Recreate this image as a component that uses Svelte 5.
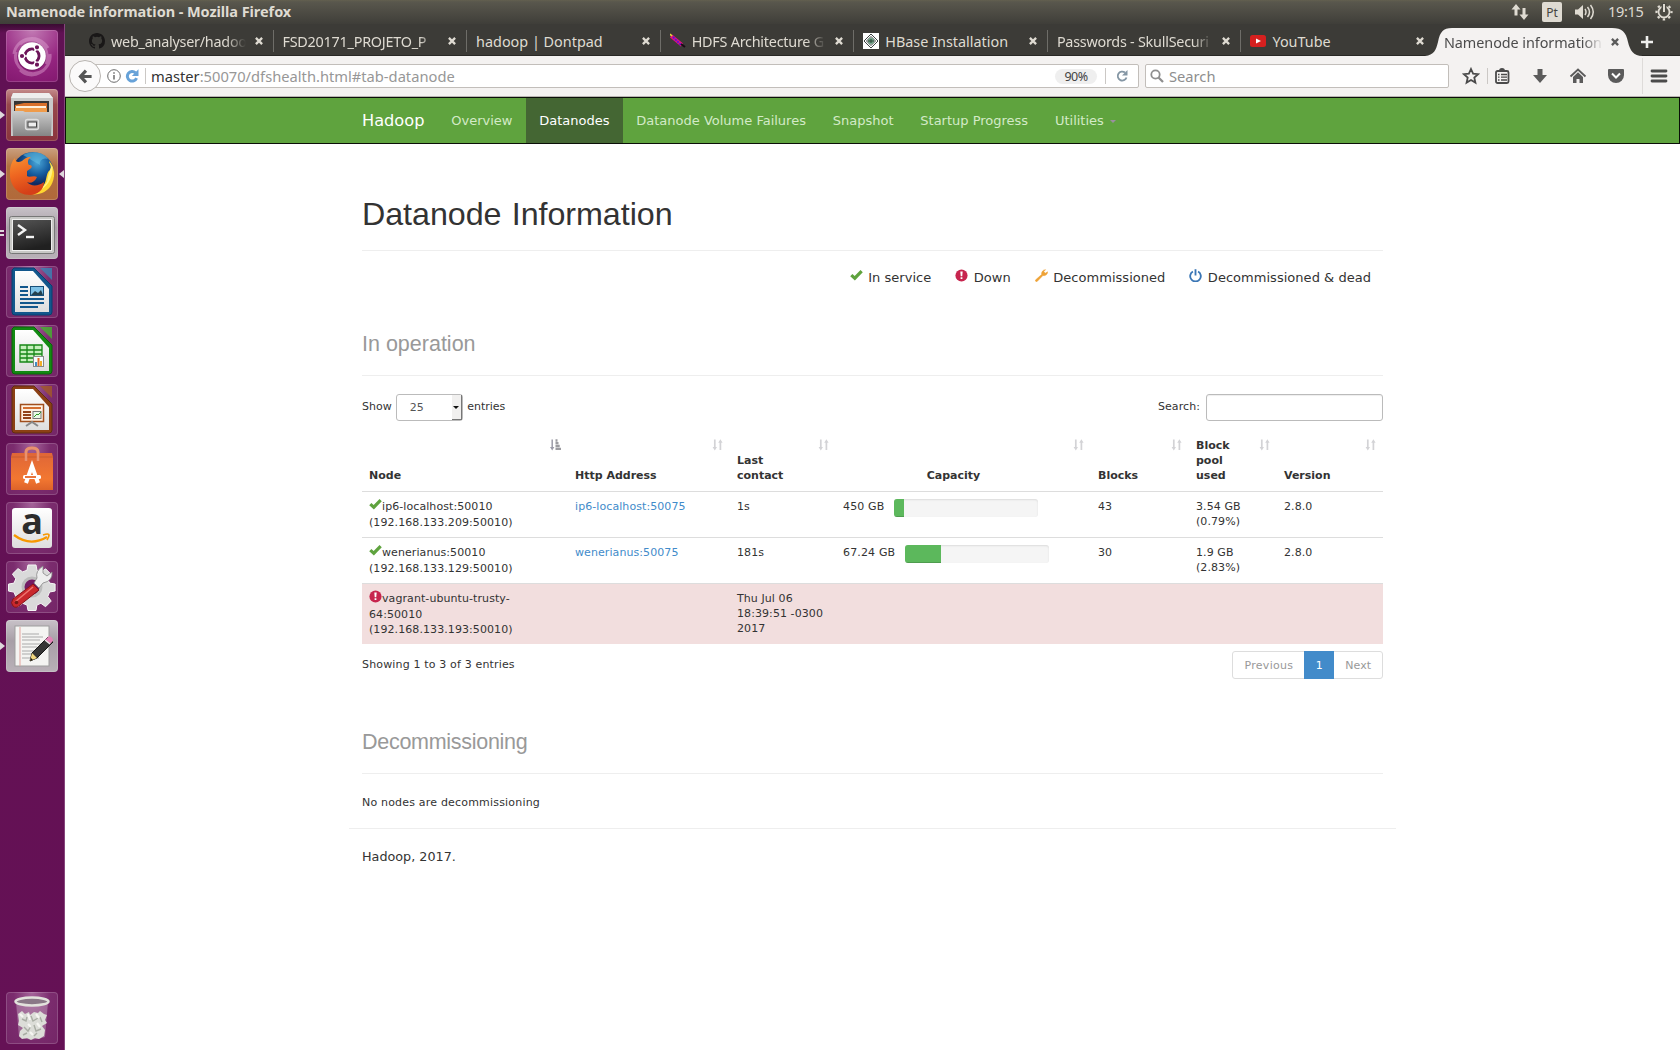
<script>
  const tabs = [
    { title: 'web_analyser/hadoo', icon: 'github', fade: true },
    { title: 'FSD20171_PROJETO_P', icon: '', fade: true },
    { title: 'hadoop | Dontpad', icon: '' },
    { title: 'HDFS Architecture G', icon: 'feather', fade: true },
    { title: 'HBase Installation', icon: 'emblem' },
    { title: 'Passwords - SkullSecuri', icon: '', fade: true },
    { title: 'YouTube', icon: 'youtube' }
  ];

  const launcher = [
    { id: 'dash', tone: 'magenta' },
    { id: 'files', tone: 'red', left: 1 },
    { id: 'firefox', tone: 'orange', left: 1, right: true },
    { id: 'terminal', tone: 'grey', left: 2 },
    { id: 'writer', tone: 'plum' },
    { id: 'calc', tone: 'plum' },
    { id: 'impress', tone: 'plum' },
    { id: 'software', tone: 'plum' },
    { id: 'amazon', tone: 'plum' },
    { id: 'settings', tone: 'plum' },
    { id: 'gedit', tone: 'grey', left: 1 }
  ];

  const nav = ['Overview', 'Datanodes', 'Datanode Volume Failures', 'Snapshot', 'Startup Progress'];

  const legend = [
    { icon: 'ok', label: 'In service' },
    { icon: 'down', label: 'Down' },
    { icon: 'wrench', label: 'Decommissioned' },
    { icon: 'power', label: 'Decommissioned & dead' }
  ];

  const columns = [['Node'], ['Http Address'], ['Last', 'contact'], ['Capacity'], ['Blocks'], ['Block', 'pool', 'used'], ['Version']];

  const rows = [
    { icon: 'ok', node: ['ip6-localhost:50010', '(192.168.133.209:50010)'], http: 'ip6-localhost:50075', contact: ['1s'], cap: '450 GB', used: 7, blocks: '43', pool: ['3.54 GB', '(0.79%)'], version: '2.8.0' },
    { icon: 'ok', node: ['wenerianus:50010', '(192.168.133.129:50010)'], http: 'wenerianus:50075', contact: ['181s'], cap: '67.24 GB', used: 25, blocks: '30', pool: ['1.9 GB', '(2.83%)'], version: '2.8.0' },
    { icon: 'down', dead: true, node: ['vagrant-ubuntu-trusty-', '64:50010', '(192.168.133.193:50010)'], http: '', contact: ['Thu Jul 06', '18:39:51 -0300', '2017'], cap: '', used: 0, blocks: '', pool: [], version: '' }
  ];
</script>

{#snippet status(kind)}
  <svg class="status" viewBox="0 0 12 12">
    {#if kind === 'ok'}
      <path d="M0.2 6.6 L2.2 4.7 L4.3 6.5 L9.7 1 L11.8 3 L4.5 10.5 Z" fill="#5fa33e" />
    {:else if kind === 'down'}
      <circle cx="6" cy="6" r="5.6" fill="#c7254e" />
      <path d="M4.9 2.4h2.2l-.4 4.2H5.3z" fill="#fff" />
      <rect x="5.1" y="7.5" width="1.8" height="1.7" rx=".4" fill="#fff" />
    {:else if kind === 'wrench'}
      <path d="M.4 10.2 L6.2 5 C5.8 3 7.2 .7 9.7 .6 L8.1 2.4 L9.5 3.9 L11.6 2.6 C11.7 5 9.6 6.6 7.3 6 L1.9 11.6 C1 12 0 11 .4 10.2z" fill="#eea236" stroke="#eea236" stroke-width=".5" />
    {:else}
      <path d="M3.6 2.3 A4.9 4.9 0 1 0 8.4 2.3" fill="none" stroke="#3a76b5" stroke-width="1.7" />
      <path d="M6 .2V6" stroke="#3a76b5" stroke-width="1.7" />
    {/if}
  </svg>
{/snippet}

{#snippet closeMark()}
  <svg class="close" viewBox="0 0 10 10"><path d="M1.9 1.9 L8.1 8.1 M8.1 1.9 L1.9 8.1" stroke="currentColor" stroke-width="2.3" /></svg>
{/snippet}

{#snippet sortMark(active)}
  <svg class="sort" viewBox="0 0 12 12">
    {#if active}
      <path d="M2.2 .5V9" stroke="#9b9ba8" stroke-width="1.5" /><path d="M0 8h4.4L2.2 11.4z" fill="#9b9ba8" />
      <path d="M5.5 1.500h2M5.500 4.200h3M5.500 7h4.200M5.500 9.900h5.500" stroke="#9b9ba0" stroke-width="2.300" />
    {:else}
      <path d="M2.800 .500V9M8.400 3V11" stroke="#d3d3d6" stroke-width="1.700" />
      <path d="M.600 8H5L2.800 11.500zM6.200 3.800h4.400L8.400 .300z" fill="#d3d3d6" />
    {/if}
  </svg>
{/snippet}

{#snippet appIcon(id)}
  <svg class="app-icon" viewBox="0 0 52 52">
    {#if id === 'dash'}
      <path d="M8 24C10 8 32 2 42 18M44 24C46 40 26 52 14 40M14 14C28 2 46 16 40 34M38 40C24 50 6 38 10 22" fill="none" stroke="#e9b3dc" stroke-width="3" opacity=".4" />
      <circle cx="26" cy="26.5" r="14.500" fill="#3c0b35" opacity=".25" />
      <circle cx="26" cy="26" r="13.800" fill="#fff" />
      <circle cx="26" cy="26" r="7" fill="none" stroke="#6c1459" stroke-width="3" />
      <path d="M26 26H14M26 26L32 15.600M26 26L32 36.400" stroke="#fff" stroke-width="1.600" />
      <circle cx="26" cy="26" r="5.400" fill="#fff" />
      <g fill="#6c1459" stroke="#fff" stroke-width="1.200"><circle cx="16" cy="26" r="2.700" /><circle cx="31" cy="17.300" r="2.700" /><circle cx="31" cy="34.700" r="2.700" /></g>
    {:else if id === 'files'}
      <path d="M7 4h36l4 5v38H5V9z" fill="#c9c9c9" /><path d="M7 4h36l4 5H5z" fill="#eee" />
      <rect x="8" y="12" width="35" height="14" fill="#353535" />
      <path d="M9 16l9-2h23v9H9z" fill="#d9702b" /><path d="M10 17h30v2H10z" fill="#fff0dc" /><path d="M9 19h32v5H9z" fill="#ef9b4b" />
      <path d="M6 22h11l2 1h27l-1 24H7z" fill="url(#metal)" />
      <rect x="19.500" y="30.500" width="13" height="10" rx="2" fill="#aaa" stroke="#dedede" stroke-width="1.300" /><rect x="22" y="33" width="8.500" height="5" fill="#eee" stroke="#444" />
    {:else if id === 'firefox'}
      <circle cx="27" cy="25" r="21" fill="url(#globe)" />
      <path d="M17 7C24 3 36 3 42 11C37 9 33 13 34 17C29 14 24 11 17 7z" fill="#62bde2" opacity=".55" />
      <path d="M43 13C52 22 49 40 36 45C31 47 24 47 22 44L35 40C42 35 39 25 44 22C46 18 43 15 43 13z" fill="#ffd630" />
      <path d="M46 17C48 26 43 38 34 42L41 34C42 27 44 22 46 17z" fill="#fff282" />
      <path d="M9 10C9 14 12 15 16 13C20 9 23 9 25 9C22 11 21 14 23 17C26 17 27 19 24 21L21 23V28C23 30 28 27 31 29C29 34 24 36 21 34C25 39 33 38 38 34C38 42 31 47 24 47C10 47 3 35 4 24C4 18 6 13 9 10z" fill="url(#fox)" />
    {:else if id === 'terminal'}
      <rect x="3.500" y="9.500" width="45" height="37" rx="2" fill="#c8c8c6" stroke="#777" />
      <rect x="6.500" y="12.500" width="39" height="31" fill="url(#screen)" stroke="#eee" />
      <path d="M12 18l7 5-7 5" fill="none" stroke="#f3f3f3" stroke-width="2.400" /><path d="M20 30h8" stroke="#f3f3f3" stroke-width="2.400" />
    {:else if id === 'writer' || id === 'calc' || id === 'impress'}
      {@const c = id === 'writer' ? '#12578c' : id === 'calc' ? '#128a12' : '#8b4014'}
      {@const edge = id === 'writer' ? '#083f70' : id === 'calc' ? '#0a6209' : '#5f2d10'}
      <path d="M8 2h20l18 18v26q0 3-3 3H9q-3 0-3-3V4z" fill={c} stroke={edge} />
      <path d="M34 2h12v12z" fill={id === 'writer' ? '#3b85b5' : id === 'calc' ? '#43b52e' : '#a35a28'} opacity=".8" />
      <path d="M9 5h18l16 18v23H9z" fill="url(#paper)" />
      {#if id === 'writer'}
        <path d="M14 21h8M14 25h8M14 29h8M14 33h24M14 37h24M14 41h18" stroke="#12578c" stroke-width="1.800" />
        <rect x="24.500" y="20.500" width="13" height="9" fill="#7dc1e6" stroke="#174f79" /><path d="M25 29l4-4 3 2 3-3 2 5z" fill="#24404d" />
      {:else if id === 'calc'}
        <path d="M14 20h22v17H14zM14 25h22M14 29h22M14 33h22M21 20v17M28 20v17" fill="#c6f0bd" stroke="#168716" stroke-width="1.300" />
        <rect x="27.500" y="31.500" width="10" height="10" fill="#f4fcff" stroke="#888" /><path d="M29 37h2v4h-2z" fill="#448cc3" /><path d="M31.500 33h2v8h-2z" fill="#e76a22" /><path d="M34 36h2v5h-2z" fill="#f2af28" />
      {:else}
        <rect x="14.500" y="20.500" width="23" height="17" fill="#fff1e2" stroke="#a04e1c" stroke-width="1.500" />
        <path d="M17 24h18" stroke="#d36e31" stroke-width="2" /><path d="M17 28h8M17 31h8M17 34h8" stroke="#924319" stroke-width="2" />
        <rect x="27" y="27.500" width="8" height="7" fill="#eaf9e7" stroke="#777" /><path d="M28 33l3-3 1 1 3-3" fill="none" stroke="#2d9c26" /><path d="M20 42l6-4 6 4" fill="none" stroke="#888" stroke-width="2" />
      {/if}
    {:else if id === 'software'}
      <path d="M20 17V9q0-4 6-4t6 4v8" fill="none" stroke="#de8058" stroke-width="3" />
      <path d="M6 10h40l1 4v33H5V14z" fill="url(#bag)" /><path d="M5 14h42" stroke="#c65a31" />
      <path d="M20 18V9q0-4 6-4t6 4v9" fill="none" stroke="#e89170" stroke-width="2.500" />
      <path d="M20 40l6-17 6 17" fill="none" stroke="#fff" stroke-width="4" /><rect x="17" y="32" width="18" height="4" rx="1.500" fill="#fff" /><path d="M19 34h11" stroke="#e66727" stroke-width="1.800" />
    {:else if id === 'amazon'}
      <rect x="6" y="6" width="40" height="40" rx="3" fill="url(#paper)" />
      <text x="26" y="32" text-anchor="middle" class="amazon-letter">a</text>
      <path d="M8 33Q24 45 41 35" fill="none" stroke="#f79800" stroke-width="2.300" /><path d="M37 33q6-2 6 0t-2 5" fill="none" stroke="#f79800" stroke-width="1.700" />
    {:else if id === 'settings'}
      <path d="M22 4h8l1 5.500 4 1.700 4.600-3.400 5.600 5.600-3.400 4.700 1.800 4 5.500.9v7l-5.500 1-1.800 4.400 3.400 4.700-5.600 5.600-4.700-3.400-4 1.800-.9 5.400h-8l-1-5.500-4.400-1.700-4.700 3.400-5.500-5.600 3.300-4.700-1.700-4.300-5.500-1v-7l5.500-1 1.800-4.300-3.400-4.700 5.600-5.500 4.700 3.300 4.300-1.700z" fill="#dadada" stroke="#f6f6f6" />
      <circle cx="26" cy="26" r="9" fill="#731a64" stroke="#bcbcbc" stroke-width="3" />
      <path d="M31 17q-2-7 6-12v7l4 3 5-4q1 9-9 11l-4 5-5-5z" fill="#eee" stroke="#888" stroke-width=".8" />
      <path d="M27 23l6 6-19 15q-4 4-7 1t0-7z" fill="#c9282c" stroke="#881419" /><path d="M27 26L9 41" stroke="#ef7771" stroke-width="1.500" /><circle cx="10.500" cy="41.500" r="1.800" fill="#731818" />
    {:else if id === 'gedit'}
      <rect x="9" y="6" width="34" height="40" fill="#f4f4f2" stroke="#9e9e9e" /><path d="M14 7v39" stroke="#e3a49d" />
      <path d="M16 14h17M16 17h21M16 20h18M16 24h20M16 27h15M16 31h20M16 34h11M16 38h17" stroke="#aaa" />
      <path d="M24 41l2-8L42 17l5 5-16 16z" fill="#353535" stroke="#171717" /><path d="M24 41l2-8 5 5z" fill="#f1d77f" /><path d="M24 41l1-3 2 2z" fill="#111" /><path d="M39 20l4-4q4 1 4 5l-3 3z" fill="#e284b6" /><path d="M39 20l5 4" stroke="#e9e9e9" stroke-width="1.500" />
    {:else}
      <path d="M10 10h32l-3 35q-13 5-26 0z" fill="#bf9dba" opacity=".5" />
      <path d="M12 22l4-3 3 3 4-2 1 3 4-3 4 1 2-2 4 3 3 1-2 5 2 3-5 3 3 4-1 6-5 3-4-1-4 2-4-2-5 1-3-3 1-5 3-3-5-3 1-4z" fill="#dcddd8" />
      <path d="M16 27l4 2 1-4M25 24l2 5 5-3M34 25l2 5M18 35l4 4 3-5M28 33l2 6 5-2M17 43l4-2M28 44l3-3" fill="none" stroke="#a9ada4" stroke-width="1.400" />
      <path d="M14 22l3 3M22 22l2 6M30 22l3 4M22 32l3 3M31 31l3 4M24 40l3 3" fill="none" stroke="#f6f6f2" stroke-width="2.200" />
      <ellipse cx="26" cy="9.500" rx="16.500" ry="4" fill="#8a7887" stroke="#e2e2dc" stroke-width="2.500" />
    {/if}
  </svg>
{/snippet}

<svg class="defs" width="0" height="0">
  <defs>
    <linearGradient id="metal" x2="0" y2="1"><stop stop-color="#ccc" /><stop offset="1" stop-color="#858585" /></linearGradient>
    <radialGradient id="globe" cx=".6" cy=".25"><stop stop-color="#4aa6d8" /><stop offset=".6" stop-color="#145a9c" /><stop offset="1" stop-color="#102b63" /></radialGradient>
    <linearGradient id="fox" x2=".3" y2="1"><stop stop-color="#f89432" /><stop offset=".5" stop-color="#ee6520" /><stop offset="1" stop-color="#d54018" /></linearGradient>
    <linearGradient id="screen" x2=".3" y2="1"><stop stop-color="#555" /><stop offset="1" stop-color="#202020" /></linearGradient>
    <linearGradient id="paper" x2="0" y2="1"><stop stop-color="#fff" /><stop offset="1" stop-color="#dedede" /></linearGradient>
    <linearGradient id="bag" x2="0" y2="1"><stop stop-color="#df6637" /><stop offset=".7" stop-color="#f27731" /><stop offset="1" stop-color="#dd6329" /></linearGradient>
  </defs>
</svg>

<div class="desktop">
  <header class="panel">
    <span class="window-title">Namenode information - Mozilla Firefox</span>
    <div class="tray">
      <svg class="net" viewBox="0 0 18 18"><path d="M5 6v6.500M13 5v7" stroke="#dfdbd2" stroke-width="3" /><path d="M.5 6.500L5 1l4.500 5.500zM8.500 11.500L13 17l4.500-5.500z" fill="#dfdbd2" /></svg>
      <span class="lang">Pt</span>
      <svg class="vol" viewBox="0 0 20 16"><path d="M0 5.500h3L8 1v14l-5-4.500H0z" fill="#dfdbd2" /><path d="M10 5q2 3 0 6M12.500 3q4 5 0 10M15.500 1q5.500 7 0 14" fill="none" stroke="#dfdbd2" stroke-width="1.500" /></svg>
      <span class="clock">19:15</span>
      <svg class="gear" viewBox="0 0 18 18"><circle cx="9" cy="9" r="5.500" fill="none" stroke="#dfdbd2" stroke-width="1.800" /><circle cx="9" cy="9" r="7.500" fill="none" stroke="#dfdbd2" stroke-width="2.200" stroke-dasharray="2.400 3.490" stroke-dashoffset="1.200" /><path d="M9 0v9" stroke="#4a4943" stroke-width="5" /><path d="M9 1v8" stroke="#dfdbd2" stroke-width="2" /></svg>
    </div>
  </header>

  <div class="workspace">
    <aside class="launcher">
      {#each launcher as item}
        <div class="tile {item.tone}">
          {@render appIcon(item.id)}
          {#if item.left === 1}<i class="pip"></i>{/if}
          {#if item.left === 2}<i class="pip two"></i>{/if}
          {#if item.right}<i class="pip right"></i>{/if}
        </div>
      {/each}
      <div class="tile plum trash">{@render appIcon('trash')}</div>
    </aside>

    <section class="browser">
      <div class="tabbar">
        {#each tabs as tab, i}
          <div class="tab" class:first={i === 0} class:last={i === 6}>
            {#if tab.icon === 'github'}
              <svg class="favicon" viewBox="0 0 16 16"><path fill="#191717" d="M8 0C3.580 0 0 3.580 0 8c0 3.540 2.290 6.530 5.470 7.590.4.070.55-.17.55-.38 0-.19-.01-.82-.01-1.490-2.010.37-2.530-.49-2.690-.94-.09-.23-.48-.94-.82-1.130-.28-.15-.68-.52-.01-.53.63-.01 1.080.58 1.230.82.72 1.210 1.870.87 2.330.66.070-.52.28-.87.51-1.070-1.780-.2-3.640-.89-3.640-3.950 0-.87.31-1.590.82-2.150-.08-.2-.36-1.020.08-2.120 0 0 .67-.21 2.200.82a7.600 7.600 0 014 0c1.530-1.040 2.200-.82 2.200-.82.44 1.100.16 1.920.08 2.120.51.56.82 1.270.82 2.150 0 3.070-1.870 3.750-3.650 3.950.29.25.54.73.54 1.480 0 1.070-.01 1.930-.01 2.200 0 .21.15.46.55.38A8 8 0 0016 8c0-4.420-3.580-8-8-8z" /></svg>
            {:else if tab.icon === 'feather'}
              <svg class="favicon" viewBox="0 0 16 16"><path d="M1 3L12 12" stroke="#e0127d" stroke-width="3.600" /><path d="M3 4L11 12" stroke="#5a12d8" stroke-width="1.800" stroke-dasharray="2 1" /><path d="M0 1l2 2" stroke="#e8d83a" stroke-width="1.600" /><path d="M11 11l4 3" stroke="#180c14" stroke-width="2" /></svg>
            {:else if tab.icon === 'emblem'}
              <svg class="favicon" viewBox="0 0 16 16"><rect width="16" height="16" fill="#fff" /><path d="M8 1l7 7-7 7-7-7zM8 3.500L12.500 8 8 12.500 3.500 8z" fill="none" stroke="#3b4240" /><circle cx="8" cy="8" r="3" fill="#6da184" /><path d="M5 8h6M8 6v4" stroke="#30463b" /></svg>
            {:else if tab.icon === 'youtube'}
              <svg class="favicon" viewBox="0 0 16 16"><rect y="2" width="16" height="12" rx="2.500" fill="#d6201f" /><path d="M6 5.500l5 2.500-5 2.500z" fill="#fff" /></svg>
            {/if}
            <span class="tab-title" class:fade={tab.fade}>{tab.title}</span>
            {@render closeMark()}
          </div>
        {/each}
        <div class="tab active">
          <svg class="tab-shape" viewBox="0 0 218 28" preserveAspectRatio="none"><path d="M0 28C9 27 11 22 13 14C15 4 18 0 27 0H187C197 0 201 4 203 14C205 22 208 28 218 28z" fill="#f4f2f1" /></svg>
          <span class="tab-title fade">Namenode information</span>
          {@render closeMark()}
        </div>
        <svg class="plus" viewBox="0 0 14 14"><path d="M7 1v12M1 7h12" stroke="#f0f0ee" stroke-width="2.600" /></svg>
      </div>

      <div class="toolbar">
        <div class="back"><svg viewBox="0 0 16 16"><path d="M8.500 1.800L2.700 8l5.800 6.200M3.500 8H14.500" fill="none" stroke="#555" stroke-width="3.400" /></svg></div>
        <div class="urlbar">
          <svg class="info" viewBox="0 0 14 14"><circle cx="7" cy="7" r="6.300" fill="none" stroke="#6c6c6c" /><path d="M7 6v4.500M7 3.200v1.600" stroke="#6c6c6c" stroke-width="1.500" /></svg>
          <svg class="sync" viewBox="0 0 14 14"><path d="M10.500 3.800A4.800 4.800 0 1 0 11.600 9.200" fill="none" stroke="#67a2d8" stroke-width="3" /><path d="M13.500 .3v6.700H6.800z" fill="#67a2d8" /></svg>
          <i class="rule"></i>
          <span class="url"><b>master</b>:50070/dfshealth.html#tab-datanode</span>
          <span class="zoom">90%</span>
          <i class="rule"></i>
          <svg class="reload" viewBox="0 0 14 14"><path d="M10 3.500A4.500 4.500 0 1 0 11.500 8.500" fill="none" stroke="#8496a4" stroke-width="1.800" /><path d="M12.500 1v5.500H7z" fill="#8496a4" /></svg>
        </div>
        <div class="searchbar">
          <svg viewBox="0 0 14 14"><circle cx="5.500" cy="5.500" r="4.200" fill="none" stroke="#8e8e8e" stroke-width="1.800" /><path d="M8.500 8.500L13 13" stroke="#8e8e8e" stroke-width="2.300" /></svg>
          <span>Search</span>
        </div>
        <div class="tools">
          <svg viewBox="0 0 18 18"><path d="M9 2l2.100 4.700 5 .5-3.800 3.400 1.100 5L9 13l-4.400 2.600 1.100-5L1.900 7.200l5-.5z" fill="none" stroke="#4b4b4b" stroke-width="1.800" /></svg>
          <i class="rule"></i>
          <svg viewBox="0 0 18 18"><rect x="3" y="4" width="12.500" height="12" rx="1.500" fill="none" stroke="#4b4b4b" stroke-width="1.800" /><path d="M6 4q0-3 3-3t3 3z" fill="#4b4b4b" /><path d="M5 7.500h1.500M5 10.200h1.500M5 13h1.500M8 7.500h6M8 10.200h6M8 13h6" stroke="#4b4b4b" stroke-width="1.300" /></svg>
          <svg viewBox="0 0 18 18"><path d="M6.500 2h5v6H16l-7 8-7-8h4.500z" fill="#5b5b5b" /></svg>
          <svg viewBox="0 0 18 18"><path d="M1.500 9.500L9 2.500l7.500 7" fill="none" stroke="#5b5b5b" stroke-width="1.800" /><path d="M4 10l5-4.700L14 10v6h-3.500v-4h-3v4H4z" fill="#5b5b5b" /></svg>
          <svg viewBox="0 0 18 18"><path d="M2 2h14q1 0 1 1v5a8 8 0 0 1-16 0V3q0-1 1-1z" fill="#5b5b5b" /><path d="M5 6.500l4 4 4-4" fill="none" stroke="#fff" stroke-width="2" /></svg>
          <i class="rule tall"></i>
          <svg viewBox="0 0 18 18"><path d="M2 4h14M2 9h14M2 14h14" stroke="#4b4b4b" stroke-width="2.800" stroke-linecap="round" /></svg>
        </div>
      </div>

      <nav class="navbar">
        <span class="brand">Hadoop</span>
        {#each nav as item, i}
          <span class="nav-item" class:current={i === 1}>{item}</span>
        {/each}
        <span class="nav-item">Utilities<i class="caret"></i></span>
      </nav>

      <main class="page">
        <h1>Datanode Information</h1>
        <div class="legend">
          {#each legend as l}
            <span class="legend-item">{@render status(l.icon)}{l.label}</span>
          {/each}
        </div>

        <h2 class="operation">In operation</h2>
        <div class="controls">
          <span>Show</span>
          <div class="select"><span>25</span><i class="select-arrow"></i></div>
          <span>entries</span>
          <span class="search-label">Search:</span>
          <div class="field"></div>
        </div>

        <div class="table">
          <div class="row head">
            {#each columns as col, i}
              <div class="cell" class:center={i === 3}>
                <div>{#each col as line}<div>{line}</div>{/each}</div>
                {@render sortMark(i === 0)}
              </div>
            {/each}
          </div>
          {#each rows as r}
            <div class="row" class:dead={r.dead}>
              <div class="cell node">
                {#each r.node as line, i}<div class="line">{#if i === 0}{@render status(r.icon)}{/if}{line}</div>{/each}
              </div>
              <div class="cell link">{r.http}</div>
              <div class="cell">{#each r.contact as line}<div>{line}</div>{/each}</div>
              <div class="cell capacity">
                {#if r.cap}
                  <span>{r.cap}</span>
                  <div class="progress"><div class="bar" style="width: {r.used}%"></div></div>
                {/if}
              </div>
              <div class="cell">{r.blocks}</div>
              <div class="cell">{#each r.pool as line}<div>{line}</div>{/each}</div>
              <div class="cell">{r.version}</div>
            </div>
          {/each}
        </div>

        <div class="table-foot">
          <span class="count">Showing 1 to 3 of 3 entries</span>
          <div class="pager"><span>Previous</span><span class="on">1</span><span>Next</span></div>
        </div>

        <h2 class="decom">Decommissioning</h2>
        <p class="empty">No nodes are decommissioning</p>
        <footer>Hadoop, 2017.</footer>
      </main>
    </section>
  </div>
</div>

<style>
  :global(body) { margin: 0; background: #fff; }
  .defs { position: absolute; }
  svg { display: block; flex: none; }
  .desktop { width: 1680px; height: 1050px; overflow: hidden; display: flex; flex-direction: column; font-family: "DejaVu Sans", sans-serif; color: #333; }

  .panel { height: 24px; flex: none; box-sizing: border-box; display: flex; align-items: center; justify-content: space-between; padding: 0 7px 0 6px; background: linear-gradient(#63604f 0, #59574d 8%, #3f3e39 100%); color: #dfdbd2; font-family: "Noto Sans", sans-serif; }
  .window-title { font-weight: 700; font-size: 14.500px; letter-spacing: -0.060px; line-height: 20px; margin-top: -2px; }
  .tray { display: flex; align-items: center; height: 24px; }
  .net { width: 18px; height: 18px; margin-right: 13px; }
  .lang { width: 20px; height: 20px; border-radius: 2px; background: #dfdbd2; color: #45443e; font-size: 12px; line-height: 21px; text-align: center; margin-right: 13px; }
  .vol { width: 20px; height: 16px; margin-right: 13px; }
  .clock { font-size: 14.500px; line-height: 20px; margin-top: -2px; width: 35px; letter-spacing: -0.300px; margin-right: 12px; }
  .gear { width: 18px; height: 18px; }

  .workspace { flex: 1; display: flex; min-height: 0; }
  .launcher { width: 65px; flex: none; box-sizing: border-box; padding: 6px 0 6px 6px; display: flex; flex-direction: column; gap: 7px; background: linear-gradient(#3a0b32 0, #611154 9px, #651155 100%); border-right: 1px solid #86457c; }
  .tile { position: relative; width: 52px; height: 52px; box-sizing: border-box; border-radius: 4px; box-shadow: inset 0 0 0 1px rgba(255, 255, 255, .17); }
  .app-icon { width: 52px; height: 52px; overflow: visible; }
  .magenta { background: radial-gradient(circle at 50% 0, #c27ab4, #952580 60%, #83186f); }
  .red { background: linear-gradient(#c58c8c 0, #97484c 30%, #8a343d); }
  .orange { background: linear-gradient(#cba07f 0, #b2713f 35%, #b1693a); }
  .grey { background: linear-gradient(#c8c2c8 0, #a89fa7 40%, #b9b1b8); }
  .plum { background: radial-gradient(ellipse at 50% 0, #a5649a 0, #7b2c6e 50%, #742667 100%); }
  .trash { margin-top: auto; }
  .amazon-letter { font: 700 36px "Open Sans", sans-serif; fill: #2c2c2c; }
  .pip { position: absolute; left: -6px; top: 22px; border: 4px solid transparent; border-left: 5px solid #ded8dc; border-right: 0; }
  .pip.two { border: 0; top: 23px; width: 4px; height: 2px; border-top: 2px solid #ded8dc; border-bottom: 2px solid #ded8dc; }
  .pip.right { left: auto; right: -6px; border-left: 0; border-right: 5px solid #ded8dc; }

  .browser { flex: 1; min-width: 0; display: flex; flex-direction: column; background: #fff; }
  .tabbar { height: 32px; flex: none; box-sizing: border-box; background: #3c3b37; border-bottom: 1px solid #292825; display: flex; align-items: center; font-family: "Noto Sans", sans-serif; font-size: 14.400px; color: #dfdbd2; padding-top: 4px; }
  .tab { width: 193.600px; height: 22px; margin: -1px 0 0; flex: none; box-sizing: border-box; border-right: 1px solid #6e6d68; display: flex; align-items: center; padding: 0 9px 0 9px; }
  .tab.first { width: 208.500px; padding-left: 24px; }
  .tab.last { border-color: transparent; width: 184.500px; padding-right: 0; }
  .favicon { width: 16px; height: 16px; margin-right: 6px; }
  .tab-title { flex: 1; min-width: 0; overflow: hidden; white-space: nowrap; line-height: 20px; padding-top: 1px; margin-right: 8px; letter-spacing: 0; }
  .tab-title.fade { letter-spacing: -0.250px; mask-image: linear-gradient(90deg, #000 calc(100% - 20px), transparent); }
  .close { width: 10px; height: 10px; color: #dfdbd2; }
  .tab.active { position: relative; width: 218px; height: 28px; margin: 0 0 -1px -1px; align-self: stretch; border: 0; padding: 0 23px 0 19px; color: #4c4c4c; }
  .tab.active .tab-title, .tab.active .close { position: relative; }
  .tab.active .tab-title { letter-spacing: -0.060px; margin-right: 7px; }
  .tab.active .close { color: #5b5b5b; }
  .tab-shape { position: absolute; inset: 0; width: 218px; height: 28px; }
  .plus { width: 14px; height: 14px; margin-left: -3px; }

  .toolbar { height: 41px; flex: none; box-sizing: border-box; display: flex; align-items: center; background: #f4f2f1; border-bottom: 1px solid #b9b5b1; padding-left: 4px; font-family: "Noto Sans", sans-serif; font-size: 14.700px; }
  .back { position: relative; z-index: 1; width: 32px; height: 32px; box-sizing: border-box; border: 1px solid #b8b4b0; border-radius: 50%; background: #fbfafa; display: grid; place-items: center; flex: none; }
  .back svg { width: 15px; height: 15px; }
  .urlbar { width: 1054px; height: 24px; margin-left: -16px; box-sizing: border-box; border: 1px solid #c2beba; border-radius: 2px; background: #fff; display: flex; align-items: center; padding-left: 21px; }
  .info { width: 14px; height: 14px; margin-right: 4px; }
  .sync { width: 14px; height: 14px; margin-right: 6px; }
  .rule { width: 1px; height: 16px; background: #cbc8c5; flex: none; }
  .url { margin-left: 5px; color: #979797; white-space: nowrap; letter-spacing: 0; flex: 1; line-height: 20px; }
  .url b { font-weight: 400; color: #333; }
  .zoom { width: 42px; height: 15px; border-radius: 8px; background: #efefef; color: #444; font-size: 12.500px; line-height: 15px; text-align: center; margin-right: 8px; letter-spacing: -0.500px; }
  .reload { width: 14px; height: 14px; margin: 0 9px; }
  .searchbar { width: 304px; height: 24px; margin-left: 6px; box-sizing: border-box; border: 1px solid #c2beba; border-radius: 2px; background: #fff; display: flex; align-items: center; padding-left: 4px; gap: 5px; color: #8e8e8e; }
  .searchbar svg { width: 14px; height: 14px; }
  .tools { flex: 1; height: 40px; display: flex; align-items: center; justify-content: space-between; padding: 0 12px 0 13px; }
  .tools svg { width: 18px; height: 18px; margin-right: 11px; margin-left: -1px; }
  .tools svg:first-child, .tools svg:last-child { margin-right: 0; margin-left: 0; }
  .tools .tall { height: 36px; background: #dedbd9; }
  .tools .rule { margin: 0 -3px; }

  .navbar { height: 47px; flex: none; box-sizing: border-box; border: 1px solid #0b0f08; background: #5fa33e; display: flex; padding-left: 296px; font-size: 13px; line-height: 46px; color: #d3eac7; white-space: nowrap; }
  .brand { font-size: 16.200px; color: #fff; padding-right: 13.400px; line-height: 45px; }
  .nav-item { padding: 0 13.400px; }
  .nav-item.current { background: #446633; color: #fff; }
  .caret { display: inline-block; vertical-align: middle; margin-left: 6px; border: 3px solid transparent; border-top-color: #9a8fa0; border-bottom: 0; }

  .page { width: 1021px; margin-left: 297px; font-size: 11px; line-height: 15.350px; }
  h1, h2 { margin: 0; font-family: "Liberation Sans", Arial, sans-serif; font-weight: 400; border-bottom: 1px solid #eee; box-sizing: border-box; }
  h1 { font-size: 32.240px; line-height: 36px; height: 107px; padding-top: 52px; letter-spacing: -0.050px; word-spacing: 1.500px; }
  .legend { display: flex; justify-content: flex-end; gap: 24px; padding: 17px 12px 0 0; font-size: 13px; line-height: 20px; height: 73px; box-sizing: border-box; }
  .legend-item { display: flex; align-items: flex-start; letter-spacing: 0.030px; }
  .legend .status { width: 13px; height: 13px; margin: 1px 5.500px 0 0; }
  .status { width: 12px; height: 12px; }
  h2 { font-size: 21.500px; line-height: 24px; color: #999; }
  .operation { height: 52px; padding-top: 8px; }
  .controls { height: 54px; box-sizing: border-box; padding-top: 18px; display: flex; align-items: flex-start; line-height: 25px; }
  .select { width: 67px; height: 27px; box-sizing: border-box; border: 1px solid #bbb; border-radius: 3px; margin: 0 4.500px 0 4px; display: flex; justify-content: space-between; color: #555; padding-left: 13px; }
  .select-arrow { width: 10px; box-sizing: border-box; background: #f1f0ef; border-right: 1px solid #777; border-bottom: 1px solid #777; display: grid; place-items: center; }
  .select-arrow::after { content: ""; border: 3px solid transparent; border-top-color: #111; border-bottom: 0; }
  .search-label { margin-left: auto; letter-spacing: 0.080px; }
  .field { width: 177px; height: 27px; box-sizing: border-box; border: 1px solid #bbb; border-radius: 3px; margin-left: 6px; box-shadow: inset 0 1px 1px rgba(0, 0, 0, .07); }

  .row { display: grid; grid-template-columns: 206px 162px 106px 255px 98px 88px 106px; border-top: 1px solid #ddd; box-sizing: border-box; height: 46px; letter-spacing: 0.080px; line-height: 15.200px; }
  .row.head { height: 61px; border: 0; font-weight: 700; letter-spacing: 0; line-height: 15px; }
  .cell { padding: 7px 7px 0; min-width: 0; white-space: nowrap; }
  .head .cell { display: flex; align-items: flex-end; justify-content: space-between; position: relative; padding: 0 7px 8px; }
  .head .center { justify-content: center; padding-right: 27px; }
  .sort { position: absolute; right: 6.500px; top: 9px; width: 12px; height: 12px; }
  .node .line { display: flex; }
  .node .line:first-child { height: 15.500px; }
  .node .status { width: 13px; height: 13px; margin-top: -1px; }
  .link { color: #428bca; }
  .capacity { display: flex; align-items: flex-start; gap: 9.500px; letter-spacing: 0.150px; }
  .progress { flex: none; width: 144px; height: 18px; border-radius: 3px; overflow: hidden; background: #f5f5f5; box-shadow: inset 0 1px 2px rgba(0, 0, 0, .1); }
  .bar { height: 100%; background: #5cb85c; box-shadow: inset 0 -1px 0 rgba(0, 0, 0, .15); }
  .row.dead { height: 61px; background: #f2dede; }
  .table-foot { display: flex; justify-content: space-between; height: 72px; padding-top: 7px; box-sizing: border-box; line-height: 26px; }
  .count { letter-spacing: 0.160px; line-height: 28px; }
  .pager { display: flex; height: 28px; box-sizing: border-box; border: 1px solid #ddd; border-radius: 3px; color: #999; line-height: 27px; }
  .pager span { padding: 0 11px; }
  .pager span:first-child { letter-spacing: 0.300px; }
  .pager .on { background: #428bca; color: #fff; margin: -1px 0; line-height: 29px; padding: 0 11.500px; }
  .decom { height: 58px; padding-top: 14px; letter-spacing: -0.280px; }
  .empty { margin: 0; height: 54px; padding-top: 21px; box-sizing: border-box; letter-spacing: 0.190px; }
  footer { margin: 0 -13.400px; padding: 18px 13.400px 0; border-top: 1px solid #eee; font-size: 12.750px; line-height: 20px; }
</style>
